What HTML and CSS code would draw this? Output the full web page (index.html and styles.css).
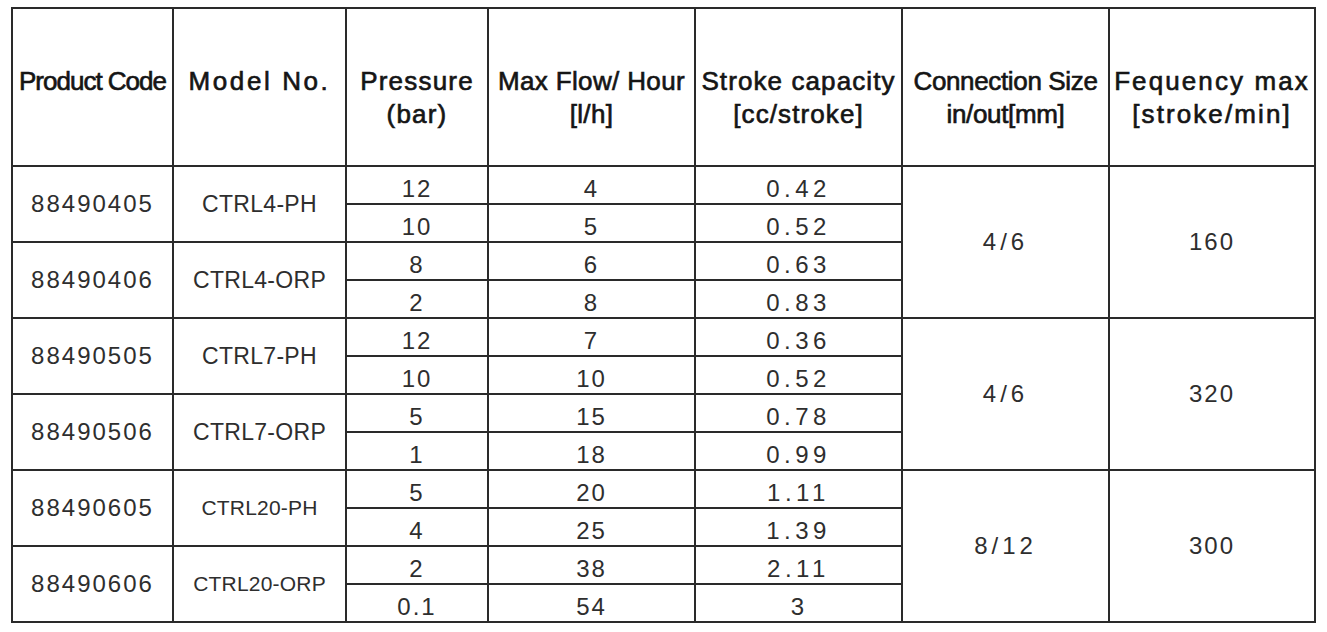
FILE: index.html
```html
<!DOCTYPE html>
<html lang="en">
<head>
<meta charset="utf-8">
<title>Dosing pump specifications</title>
<link rel="stylesheet" href="styles.css">
</head>
<body>
<table class="spec">
  <thead>
    <tr>
      <th class="c1 h-code">Product Code</th>
      <th class="c2 h-model">Model No.</th>
      <th class="c3 h-press">Pressure<br>(bar)</th>
      <th class="c4 h-flow">Max Flow/ Hour<br>[l/h]</th>
      <th class="c5 h-stroke">Stroke capacity<br>[cc/stroke]</th>
      <th class="c6 h-conn">Connection Size<br>in/out[mm]</th>
      <th class="c7 h-freq">Fequency max<br>[stroke/min]</th>
    </tr>
  </thead>
  <tbody>
    <tr>
      <td class="code" rowspan="2">88490405</td>
      <td class="model" rowspan="2">CTRL4-PH</td>
      <td class="sub">12</td><td class="sub">4</td><td class="sub dec">0.42</td>
      <td class="group frac" rowspan="4">4/6</td>
      <td class="group" rowspan="4">160</td>
    </tr>
    <tr><td class="sub">10</td><td class="sub">5</td><td class="sub dec">0.52</td></tr>
    <tr>
      <td class="code" rowspan="2">88490406</td>
      <td class="model" rowspan="2">CTRL4-ORP</td>
      <td class="sub">8</td><td class="sub">6</td><td class="sub dec">0.63</td>
    </tr>
    <tr><td class="sub">2</td><td class="sub">8</td><td class="sub dec">0.83</td></tr>

    <tr>
      <td class="code" rowspan="2">88490505</td>
      <td class="model" rowspan="2">CTRL7-PH</td>
      <td class="sub">12</td><td class="sub">7</td><td class="sub dec">0.36</td>
      <td class="group frac" rowspan="4">4/6</td>
      <td class="group" rowspan="4">320</td>
    </tr>
    <tr><td class="sub">10</td><td class="sub">10</td><td class="sub dec">0.52</td></tr>
    <tr>
      <td class="code" rowspan="2">88490506</td>
      <td class="model" rowspan="2">CTRL7-ORP</td>
      <td class="sub">5</td><td class="sub">15</td><td class="sub dec">0.78</td>
    </tr>
    <tr><td class="sub">1</td><td class="sub">18</td><td class="sub dec">0.99</td></tr>

    <tr>
      <td class="code" rowspan="2">88490605</td>
      <td class="model small" rowspan="2">CTRL20-PH</td>
      <td class="sub">5</td><td class="sub">20</td><td class="sub dec">1.11</td>
      <td class="group frac" rowspan="4">8/12</td>
      <td class="group" rowspan="4">300</td>
    </tr>
    <tr><td class="sub">4</td><td class="sub">25</td><td class="sub dec">1.39</td></tr>
    <tr>
      <td class="code" rowspan="2">88490606</td>
      <td class="model small" rowspan="2">CTRL20-ORP</td>
      <td class="sub">2</td><td class="sub">38</td><td class="sub dec">2.11</td>
    </tr>
    <tr><td class="sub">0.1</td><td class="sub">54</td><td class="sub">3</td></tr>
  </tbody>
</table>
</body>
</html>
```
FILE: styles.css
```css
html, body {
  margin: 0;
  padding: 0;
  background: #ffffff;
}

body {
  font-family: "Liberation Sans", Arial, sans-serif;
  color: #262626;
}

.spec {
  box-sizing: border-box;
  width: 1305px;
  margin: 7px 0 0 11px;
  border-collapse: separate;
  border-spacing: 0;
  table-layout: fixed;
  border-left: 2px solid #2a2a2a;
  border-top: 2px solid #2a2a2a;
}

.spec th,
.spec td {
  box-sizing: border-box;
  padding: 0;
  border-right: 2px solid #2a2a2a;
  border-bottom: 2px solid #2a2a2a;
  text-align: center;
  white-space: nowrap;
}

.spec th {
  height: 158px;
  vertical-align: top;
  padding-top: 56px;
  font-size: 26px;
  line-height: 33px;
  font-weight: 400;
  color: #151515;
  -webkit-text-stroke: 0.65px #151515;
}

.c1 { width: 161px; }
.c2 { width: 173px; }
.c3 { width: 142px; }
.c4 { width: 207px; }
.c5 { width: 207px; }
.c6 { width: 207px; }
.c7 { width: 206px; }

.h-code { letter-spacing: -1px; padding-top: 60px; }
.h-model { letter-spacing: 2.6px; padding-top: 62px; }
.h-press { letter-spacing: 1.2px; }
.h-flow { letter-spacing: 0.35px; }
.h-stroke { letter-spacing: 1.1px; }
.h-conn { letter-spacing: -0.35px; }
.h-freq { letter-spacing: 2.1px; }

.spec td {
  height: 38px;
  vertical-align: middle;
  font-size: 24px;
  line-height: 26px;
  letter-spacing: 2px;
  color: #2e2e2e;
}

.spec td.sub {
  padding-top: 8px;
}

.spec td.dec {
  letter-spacing: 4.5px;
}

.spec td.frac {
  letter-spacing: 4px;
}

.spec td.model {
  font-size: 23px;
  letter-spacing: 0.3px;
}

.spec td.model.small {
  font-size: 21px;
  letter-spacing: 0.2px;
}
```
